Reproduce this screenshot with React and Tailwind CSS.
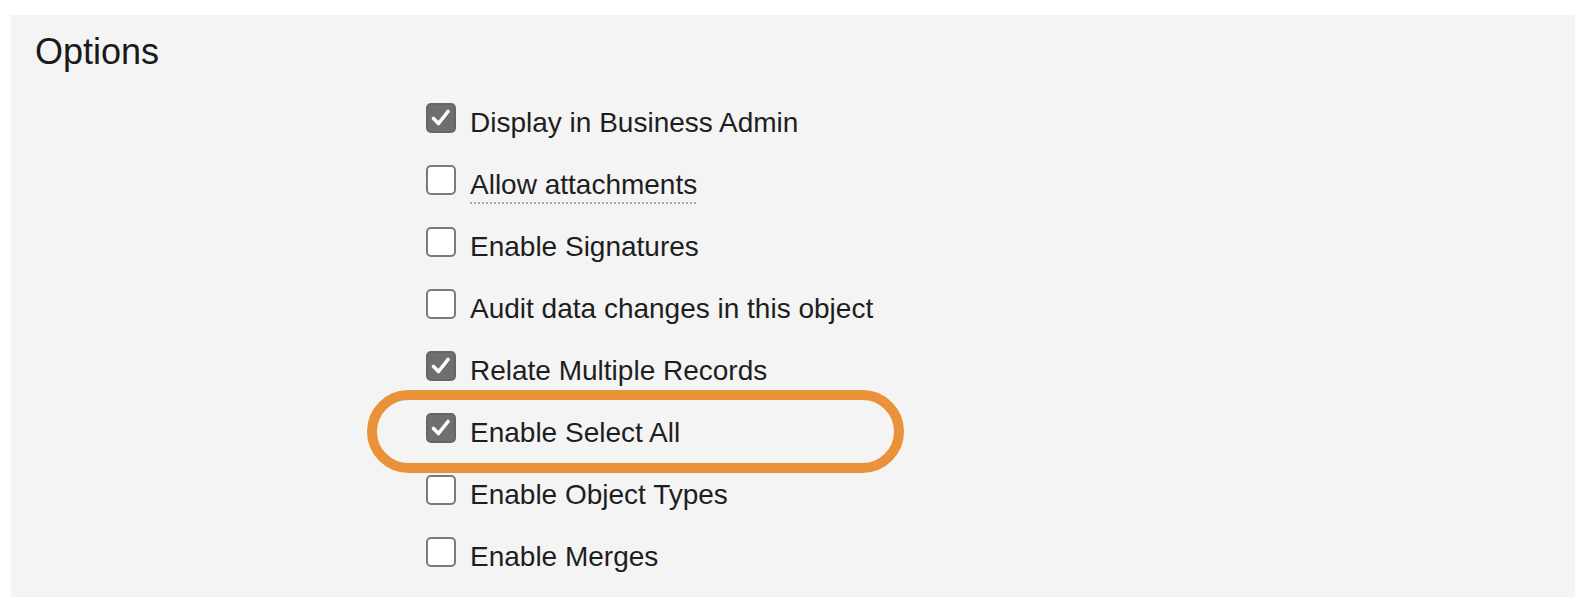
import React from 'react';

const options = [
  { label: 'Display in Business Admin', checked: true },
  { label: 'Allow attachments', checked: false, dotted: true },
  { label: 'Enable Signatures', checked: false },
  { label: 'Audit data changes in this object', checked: false },
  { label: 'Relate Multiple Records', checked: true },
  { label: 'Enable Select All', checked: true },
  { label: 'Enable Object Types', checked: false },
  { label: 'Enable Merges', checked: false },
];

const Box = ({ checked }) =>
  checked ? (
    <div className="w-[30px] h-[30px] shrink-0 rounded-[5px] bg-[#6f6f6f] border-2 border-[#666] flex items-center justify-center">
      <svg width="22" height="22" viewBox="0 0 22 22" fill="none">
        <path d="M3.5 11.5 L8.5 16.5 L18 4.5" stroke="#fff" strokeWidth="3.6" strokeLinecap="round" strokeLinejoin="round" />
      </svg>
    </div>
  ) : (
    <div className="w-[30px] h-[30px] shrink-0 rounded-[5px] bg-white border-2 border-[#7a7a7a]" />
  );

const App = () => {
  return (
    <div className="w-[1586px] h-[608px] bg-white pt-[15px] font-['Liberation_Sans',Arial,sans-serif]">
      <div className="relative mx-[11px] h-[582px] bg-[#f4f4f4] pt-[19px] pl-[24px]">
        <h2 className="text-[36px] leading-[36px] text-[#1a1a1a]">Options</h2>

        <div className="mt-[17px] ml-[391px] flex flex-col">
          {options.map((opt) => (
            <div key={opt.label} className="h-[62px] flex items-start gap-[14px]">
              <div className="mt-[16px]">
                <Box checked={opt.checked} />
              </div>
              <span
                className={
                  'mt-[22px] text-[28px] leading-[28px] text-[#1e1e1e] ' +
                  (opt.dotted
                    ? 'underline decoration-dotted decoration-[#a8a8a8] decoration-2 underline-offset-[8px]'
                    : '')
                }
              >
                {opt.label}
              </span>
            </div>
          ))}
        </div>

        <div className="absolute left-[356px] top-[375px] w-[537px] h-[83px] rounded-full border-[10px] border-[#e9923a]" />
      </div>
    </div>
  );
};

export default App;
